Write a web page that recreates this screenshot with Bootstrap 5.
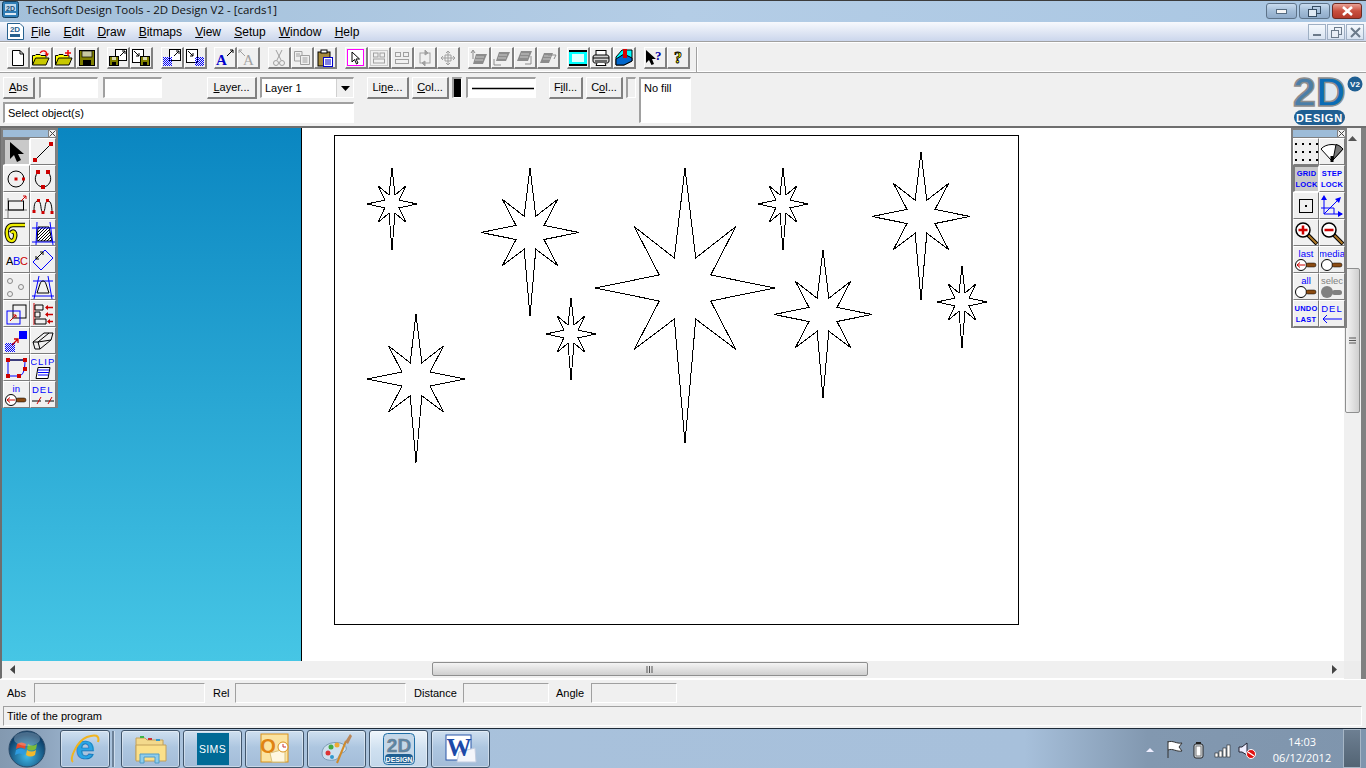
<!doctype html>
<html lang="en">
<head>
<meta charset="utf-8">
<title>TechSoft Design Tools - 2D Design V2 - [cards1]</title>
<link href="https://cdn.jsdelivr.net/npm/bootstrap@5.3.0/dist/css/bootstrap.min.css" rel="stylesheet">
<style>
html,body{height:768px;overflow:hidden}
body{background:#f0f0f0;font-family:"Liberation Sans",Arial,sans-serif;font-size:12px;color:#000;line-height:1.2}
.app{width:1366px;height:768px;position:relative}
svg{display:block;overflow:visible}
.titlebar{height:22px;background:linear-gradient(90deg,#a3c0da,#b4cde6 50%,#a9c6e2);border-top:1px solid #3c3c3c;padding-left:2px}
.titlebar-text{font-family:"Open Sans",sans-serif;font-size:11.5px;margin-left:7px;color:#111;margin-top:2px}
.winbtn{width:31px;height:16px;border:1px solid #5d7389;border-radius:3px;background:linear-gradient(#c9dcef,#a3bdd8 50%,#8fabc9);display:flex;align-items:center;justify-content:center}
.winbtn.shut{background:linear-gradient(#e9a195,#c9503f 50%,#b33a2b);border-color:#6b2a22;width:30px}
.winctl{margin-left:auto;margin-top:2px;margin-right:4px;gap:2px}
.menubar{height:20px;background:linear-gradient(#f7f9fd,#cbd6ec);padding-left:7px;border-bottom:1px solid #a0a0a0}
.menu-icon{margin-top:1px}
.menu-list{margin-left:7px;gap:13.2px;font-size:12px;padding-top:3px}
.mdibtn{width:18px;height:16px;border:1px solid #9fb0c4;background:linear-gradient(#f5f9fd,#d8e3f1);display:flex;align-items:center;justify-content:center}
.mdictl{margin-left:auto;margin-right:2px;margin-top:2px;gap:1px}
.toolrow{height:31px;border-top:1px solid #fff;border-bottom:1px solid #a0a0a0;padding:4px 0 0 7px;box-shadow:inset 0 -1px 0 #fff}
.grp{margin-right:7.75px}
.tb{width:23px;height:22px;background:#f0f0f0;border-top:1px solid #fff;border-left:1px solid #fff;border-right:2px solid #808080;border-bottom:2px solid #808080;display:flex;align-items:center;justify-content:center;padding:0;flex:none}
.tb-sep{width:1px;height:25px;background:#a0a0a0;margin-left:6px;box-shadow:1px 0 0 #fff}
.props{height:55px;position:relative;border-bottom:2px solid #6e6e6e;padding:4px 0 0 3px}
.pbtn{height:22px;background:#f0f0f0;border-top:1px solid #fff;border-left:1px solid #fff;border-right:2px solid #808080;border-bottom:2px solid #808080;text-align:center;padding:3px 0 0;font-size:11px;flex:none}
.pw32{width:32px}.pw50{width:50px}.pw42{width:42px}.pw37{width:37px}.pw34{width:34px}
.field{background:#fff;height:21px;border-top:2px solid #a0a0a0;border-left:2px solid #a0a0a0;border-right:1px solid #fff;border-bottom:1px solid #fff;font-size:11px;padding:3px 0 0 3px;flex:none}
.fw59{width:59px}.fw94{width:94px}.fw70{width:70px}.fw10{width:10px}.fw351{width:351px}.fw52{width:52px;height:46px}
.flatfield{background:#f0f0f0}
.dark{background:#000}
.drop{position:absolute;right:0;top:0;bottom:0;width:17px;background:#f0f0f0;display:flex;align-items:center;justify-content:center;border-left:1px solid #d0d0d0}
.l3{margin-left:3px}.l4{margin-left:4px}.l5{margin-left:5px}.l13{margin-left:13px}.l45{margin-left:45px}
.row2{position:absolute;left:3px;top:29px}
.logo-spot{position:absolute;left:1292px;top:1px}
.mainarea{height:533px;position:relative}
.panel{width:302px;background:linear-gradient(#0a86c1,#46c6e5);border-left:2px solid #6e6e6e;border-right:1px solid #000;flex:none}
.sheetarea{width:1042px;background:#fff;padding:7px 0 0 32px;flex:none}
.paper{width:685px;height:490px;border:1px solid #000;overflow:hidden}
.vscroll{width:17px;background:#f0f0f0;position:relative;flex:none}
.vthumb{position:absolute;left:1px;top:140px;width:15px;height:145px;border:1px solid #8e8f8f;border-radius:2px;background:linear-gradient(90deg,#f4f4f4,#cfcfcf);display:flex;align-items:center;justify-content:center}
.edgebar{width:5px;background:#808080;flex:none}
.arrow-u{position:absolute;left:4px;top:8px}
.hscrollwrap{height:18px}
.hscroll{width:1344px;background:#f0f0f0;position:relative;border-left:2px solid #6e6e6e;border-bottom:1px solid #fff;flex:none}
.hthumb{position:absolute;left:430px;top:1px;width:436px;height:14px;border:1px solid #8e8f8f;border-radius:2px;background:linear-gradient(#f4f4f4,#cfcfcf);display:flex;align-items:center;justify-content:center}
.harrow-l{position:absolute;left:8px;top:4px}
.harrow-r{position:absolute;right:7px;top:4px}
.corner{width:17px;background:#ececec;flex:none}
.coords{height:27px;padding:3px 0 0 7px;border-top:1px solid #fff;font-size:11px}
.coord-label{padding-top:4px;flex:none}
.cbox{height:20px;background:#f0f0f0;border-top:1px solid #a0a0a0;border-left:1px solid #a0a0a0;border-right:1px solid #fff;border-bottom:1px solid #fff;flex:none}
.cw171{width:171px}.cw86{width:86px}
.lab-abs{width:27px}.lab-rel{width:22px;margin-left:8px}.lab-dist{width:49px;margin-left:8px}.lab-ang{width:35px;margin-left:7px}
.statusbar{height:22px;padding:0 4px 0 3px}
.statusbox{height:20px;width:1359px;border-top:1px solid #a0a0a0;border-left:1px solid #a0a0a0;border-right:1px solid #fff;border-bottom:1px solid #fff;font-size:11px;padding:3px 0 0 3px}
.taskbar{height:40px;background:linear-gradient(90deg,#8399b0,#8ca3bc 3%,#a9c2dc 8%,#a7c0db 75%,#8298b0 84%,#7f95ad);border-top:1px solid #1d2a38;position:relative;padding-top:1px}
.orb{width:60px;flex:none;padding-left:8px}
.tk{width:59px;height:38px;border:1px solid #41566c;border-radius:3px;background:linear-gradient(#cfe0f0,#adc6e0 45%,#a3bcd8);display:flex;align-items:center;justify-content:center;margin-right:3px;flex:none;box-shadow:inset 0 0 0 1px rgba(255,255,255,.4)}
.tk.ie{width:50px;margin-right:2px}
.tk.on{background:linear-gradient(#eef5fb,#cfe0f0 50%,#c3d7ea)}
.tk-gripper{width:2px;height:36px;background:#6d8299;box-shadow:1px 0 0 #cddcec;margin:1px 7px 0 0}
.sims{width:32px;height:32px;background:#006a96;color:#fff;font-size:10.5px;font-weight:400;display:flex;align-items:center;justify-content:center;letter-spacing:.3px}
.tray{position:absolute;left:1142px;top:10px;gap:0}
.clock{position:absolute;left:1269px;top:5px;width:66px;text-align:center;color:#fff;font-family:"Open Sans",sans-serif;font-size:11px;line-height:16px}
.showdesk{position:absolute;right:5px;top:0;bottom:0;width:18px;border:1px solid #a6b6c6;background:linear-gradient(#6d7f92,#536474)}
.showedge{position:absolute;right:0;top:0;bottom:0;width:5px;background:#7f95ad}
.box-float{position:absolute;background:#808080;padding:2px;z-index:5}
.box-l{left:1px;top:0;width:57px;height:280px}
.box-r{left:1291px;top:0;width:56px;height:200px}
.box-title{height:7px;background:#9dbcd8;position:relative;margin-bottom:1px}
.box-x{position:absolute;right:-1px;top:-1px;width:9px;height:9px;background:#f0f0f0;border:1px solid #808080;display:flex;align-items:center;justify-content:center}
.box-grid{display:grid;grid-template-columns:1fr 1fr;gap:0}
.tool{height:27px;background:#f0f0f0;border-top:1px solid #fff;border-left:1px solid #fff;border-right:1px solid #7c7c7c;border-bottom:1px solid #7c7c7c;display:flex;align-items:center;justify-content:center;padding:0;overflow:hidden}
.tool.down{background:#c9c9c9;border-top:2px solid #7c7c7c;border-left:2px solid #7c7c7c;border-right:1px solid #fff;border-bottom:1px solid #fff}
.toolword{color:#00f;font-size:9.5px;line-height:11px;text-align:center}
.toolcaps{color:#00f;font-size:7.5px;line-height:11px;text-align:center;font-weight:700;letter-spacing:.2px}
.toolcaps-lg{color:#00f;font-size:9.5px;line-height:11px;text-align:center;letter-spacing:1px}
.toolgray{color:#808080}
.logotext{font-family:"Liberation Sans",sans-serif;font-weight:700}
</style>
</head>
<body>
<svg width="0" height="0" class="position-absolute">
<defs>
<pattern id="dith" width="2" height="2" patternUnits="userSpaceOnUse"><rect width="1" height="1" fill="#00f"/><rect x="1" y="1" width="1" height="1" fill="#00f"/></pattern>
<pattern id="hatch" width="3" height="3" patternUnits="userSpaceOnUse"><rect width="3" height="3" fill="#fff"/><path d="M0 3L3 0" stroke="#000"/></pattern>
<path id="star" d="M0-120L10.7-30L50.7-61.3L25.7-13L90 0L25.7 13L50.7 61.3L10.7 31L0 155L-10.7 31L-50.7 61.3L-25.7 13L-90 0L-25.7-13L-50.7-61.3L-10.7-30Z" fill="#fff" stroke="#000" vector-effect="non-scaling-stroke"/>
<g id="stick"><rect x="11" y="5" width="10" height="4" rx="2" fill="#8a4b12" stroke="#000" stroke-width=".5"/></g>
<g id="mag"><circle cx="9" cy="9" r="7" fill="#fff" stroke="#000" stroke-width="1.5"/><path d="M14 14L23 23" stroke="#000" stroke-width="4"/><path d="M14.5 14.5L22.5 22.5" stroke="#b07a28" stroke-width="2"/></g>
</defs>
</svg>

<div class="app d-flex flex-column">
  <div class="titlebar d-flex">
    <svg class="mt-0" width="17" height="17" viewBox="0 0 17 17"><rect x=".5" y=".5" width="16" height="16" rx="2" fill="#2f7db5" stroke="#14405f"/><rect x="3" y="3" width="11" height="7" fill="#bcd8ee"/><rect x="3" y="12" width="11" height="2" fill="#dfeaf3"/><text x="8.5" y="9.5" font-size="7" font-weight="700" text-anchor="middle" fill="#1c4f75" font-family="Liberation Sans">2D</text></svg>
    <div class="titlebar-text">TechSoft Design Tools - 2D Design V2 - [cards1]</div>
    <div class="winctl d-flex">
      <div class="winbtn"><svg width="11" height="5"><rect x=".5" y=".5" width="10" height="4" fill="#f6f6f6" stroke="#556b80"/></svg></div>
      <div class="winbtn"><svg width="13" height="11" viewBox="0 0 13 11"><rect x="4.5" y=".5" width="8" height="7" fill="none" stroke="#364d63" stroke-width="1"/><rect x=".5" y="3.5" width="8" height="7" fill="#dfe9f3" stroke="#364d63"/></svg></div>
      <div class="winbtn shut"><svg width="13" height="10"><path d="M2 1L11 9M11 1L2 9" stroke="#fff" stroke-width="2.6"/></svg></div>
    </div>
  </div>

  <div class="menubar d-flex">
    <svg class="menu-icon" width="17" height="17" viewBox="0 0 17 17"><path d="M.5.5H13L16.5 4V16.5H.5Z" fill="#fff" stroke="#27618e"/><text x="8" y="9" font-size="8" font-weight="700" text-anchor="middle" fill="#27618e" font-family="Liberation Sans">2D</text><rect x="3" y="11" width="10" height="3" fill="#27618e"/></svg>
    <div class="menu-list d-flex">
      <span><u>F</u>ile</span><span><u>E</u>dit</span><span><u>D</u>raw</span><span><u>B</u>itmaps</span><span><u>V</u>iew</span><span><u>S</u>etup</span><span><u>W</u>indow</span><span><u>H</u>elp</span>
    </div>
    <div class="mdictl d-flex">
      <div class="mdibtn"><svg width="9" height="9"><rect y="6" width="8" height="2" fill="#6b7a8a"/></svg></div>
      <div class="mdibtn"><svg width="11" height="11"><rect x="3.5" y=".5" width="7" height="7" fill="none" stroke="#6b7a8a"/><rect x=".5" y="3.5" width="7" height="7" fill="#e8eef6" stroke="#6b7a8a"/></svg></div>
      <div class="mdibtn"><svg width="11" height="11"><path d="M1 1L10 10M10 1L1 10" stroke="#6b7a8a" stroke-width="2"/></svg></div>
    </div>
  </div>

  <div class="toolrow d-flex">
    <div class="d-flex grp">
      <button class="tb"><svg width="16" height="18" viewBox="0 0 16 18"><path d="M2.500 1.500H10L13.500 5V16.500H2.500Z" fill="#fff" stroke="#000"/><path d="M10 1.500V5H13.500" fill="none" stroke="#000"/></svg></button>
      <button class="tb"><svg width="18" height="16" viewBox="0 0 18 16"><path d="M.5 15V5.500H3L4 4.500H8L9 5.500H14V7.500" fill="#ff0" stroke="#000"/><path d="M.5 15L3.500 8H17L14 15Z" fill="#c8c800" stroke="#000"/><path d="M8 3C10 0 14 0 15 4" fill="none" stroke="#e00" stroke-width="1.300"/><path d="M12.500 3.500H17L15 6.500Z" fill="#e00"/></svg></button>
      <button class="tb"><svg width="18" height="16" viewBox="0 0 18 16"><path d="M.5 15V5.500H3L4 4.500H8L9 5.500H14V7.500" fill="#ff0" stroke="#000"/><path d="M.5 15L3.500 8H17L14 15Z" fill="#c8c800" stroke="#000"/><path d="M13 0V6M10 3H16" stroke="#e00" stroke-width="1.500"/></svg></button>
      <button class="tb"><svg width="16" height="16" viewBox="0 0 16 16"><rect x=".5" y=".5" width="15" height="15" fill="#808000" stroke="#000"/><rect x="3" y="1" width="10" height="6" fill="#c8c8a0" stroke="#000" stroke-width=".7"/><rect x="4" y="10" width="8" height="5" fill="#000"/></svg></button>
    </div>
    <div class="d-flex grp">
      <button class="tb"><svg width="18" height="17" viewBox="0 0 18 17"><rect x="6.500" y=".5" width="11" height="11" fill="#fff" stroke="#000"/><path d="M11 7L16 2M13 2H16V5" fill="none" stroke="#000"/><rect x=".5" y="7.500" width="9" height="9" fill="#808000" stroke="#000"/><rect x="3" y="8" width="4" height="3" fill="#dcdcb0"/><rect x="3" y="13" width="4" height="3" fill="#000"/></svg></button>
      <button class="tb"><svg width="18" height="17" viewBox="0 0 18 17"><rect x=".5" y=".5" width="11" height="13" fill="#fff" stroke="#000"/><path d="M2 2L7 7M4 7H7V4" fill="none" stroke="#000"/><rect x="8.500" y="7.500" width="9" height="9" fill="#808000" stroke="#000"/><rect x="11" y="8" width="4" height="3" fill="#dcdcb0"/><rect x="11" y="13" width="4" height="3" fill="#000"/></svg></button>
    </div>
    <div class="d-flex grp">
      <button class="tb"><svg width="18" height="17" viewBox="0 0 18 17"><rect x="6.500" y=".5" width="11" height="11" fill="#fff" stroke="#000"/><path d="M11 7L16 2M13 2H16V5" fill="none" stroke="#000"/><rect y="8" width="9" height="9" fill="url(#dith)"/></svg></button>
      <button class="tb"><svg width="18" height="17" viewBox="0 0 18 17"><rect x=".5" y=".5" width="11" height="13" fill="#fff" stroke="#000"/><path d="M2 2L7 7M4 7H7V4" fill="none" stroke="#000"/><rect x="9" y="8" width="9" height="9" fill="url(#dith)"/></svg></button>
    </div>
    <div class="d-flex grp">
      <button class="tb"><svg width="20" height="18" viewBox="0 0 20 18"><text x="1" y="16" font-family="Liberation Serif" font-size="15" font-weight="700" fill="#00c">A</text><path d="M12 7L18 1M15 1H18V4" fill="none" stroke="#000"/></svg></button>
      <button class="tb"><svg width="20" height="18" viewBox="0 0 20 18"><text x="5" y="16" font-family="Liberation Serif" font-size="15" fill="#a0a0a0">A</text><path d="M7 7L1 1M4 1H1V4" fill="none" stroke="#a0a0a0"/></svg></button>
    </div>
    <div class="d-flex grp">
      <button class="tb"><svg width="12" height="18" viewBox="0 0 12 18" fill="none" stroke="#a0a0a0"><path d="M3 1L8 11M9 1L4 11"/><circle cx="3" cy="14" r="2.500"/><circle cx="9" cy="14" r="2.500"/></svg></button>
      <button class="tb"><svg width="18" height="16" viewBox="0 0 18 16" fill="#f0f0f0" stroke="#a0a0a0"><path d="M1.500 1.500H9V11H1.500Z"/><path d="M7.500 5.500H16.500V14.500H7.500Z"/><path d="M3 4H7M3 6H7M9.500 8H14.500M9.500 10H14.500M9.500 12H14.500" fill="none"/></svg></button>
      <button class="tb"><svg width="16" height="18" viewBox="0 0 16 18"><rect x="1" y="3" width="12" height="14" fill="#a68a3c" stroke="#000"/><rect x="4" y="1" width="6" height="3" fill="#fff" stroke="#000"/><rect x="6.500" y="8.500" width="9" height="9" fill="#fff" stroke="#00c"/><path d="M8 11H14M8 13H14M8 15H14" stroke="#00c"/></svg></button>
    </div>
    <div class="d-flex grp">
      <button class="tb"><svg width="17" height="17" viewBox="0 0 17 17"><rect x=".5" y=".5" width="16" height="16" fill="#fff" stroke="#f0f"/><path d="M5 3V13L7.500 10.500L9.500 15L11 14L9 10H12.500Z" fill="#fff" stroke="#000"/></svg></button>
      <button class="tb"><svg width="18" height="16" viewBox="0 0 18 16" fill="none" stroke="#a0a0a0"><rect x=".5" y=".5" width="17" height="15" stroke-dasharray="1 1"/><rect x="3.500" y="3" width="4.500" height="4"/><rect x="10" y="3" width="4.500" height="4"/><rect x="3.500" y="9" width="11" height="4"/></svg></button>
      <button class="tb"><svg width="16" height="14" viewBox="0 0 16 14" fill="none" stroke="#a0a0a0"><rect x="1.500" y="1.500" width="5" height="4"/><rect x="9.500" y="1.500" width="5" height="4"/><rect x="1.500" y="8.500" width="13" height="4"/></svg></button>
      <button class="tb"><svg width="16" height="16" viewBox="0 0 16 16" fill="none" stroke="#a0a0a0"><rect x="3" y="3" width="10" height="10"/><path d="M8 0L11 3L8 5ZM8 16L5 13L8 11Z" fill="#a0a0a0"/></svg></button>
      <button class="tb"><svg width="16" height="16" viewBox="0 0 16 16" fill="none" stroke="#a0a0a0"><path d="M8 1V15M1 8H15M6 3L8 1L10 3M6 13L8 15L10 13M3 6L1 8L3 10M13 6L15 8L13 10M5 5H11V11H5Z"/></svg></button>
    </div>
    <div class="d-flex grp">
      <button class="tb"><svg width="18" height="16" viewBox="0 0 18 16"><path d="M6 4H17L13 14H3Z" fill="#8c8c8c"/><path d="M6 7H14M5 10H13" stroke="#c8c8c8"/><path d="M3 1V9M1 3L3 0L5 3" fill="none" stroke="#8c8c8c"/></svg></button>
      <button class="tb"><svg width="18" height="16" viewBox="0 0 18 16"><path d="M6 2H17L13 11H3Z" fill="#8c8c8c"/><path d="M6 5H14M5 8H13" stroke="#c8c8c8"/><path d="M1 15H8M1 15V9" fill="none" stroke="#8c8c8c"/></svg></button>
      <button class="tb"><svg width="18" height="16" viewBox="0 0 18 16"><path d="M5 1H16L12 11H1Z" fill="#8c8c8c"/><path d="M5 4H13M4 7H12" stroke="#c8c8c8"/><path d="M15 6V14H9" fill="none" stroke="#8c8c8c"/></svg></button>
      <button class="tb"><svg width="18" height="14" viewBox="0 0 18 14"><path d="M5 2H14L10 12H1Z" fill="#8c8c8c"/><path d="M5 5H12M4 8H11" stroke="#c8c8c8"/><path d="M9 4H17L15 8" fill="none" stroke="#8c8c8c"/></svg></button>
    </div>
    <div class="d-flex grp">
      <button class="tb"><svg width="18" height="16" viewBox="0 0 18 16"><rect width="18" height="16" fill="#000"/><rect y="2" width="18" height="12" fill="#0ff"/><rect x="3" y="4" width="12" height="8" fill="#dff"/></svg></button>
      <button class="tb"><svg width="18" height="16" viewBox="0 0 18 16"><rect x="4" y=".5" width="10" height="5" fill="#fff" stroke="#000"/><path d="M1 7C1 5 3 5 4 5H14C15 5 17 5 17 7V11C17 13 15 13 14 13H4C3 13 1 13 1 11Z" fill="#d0d0d0" stroke="#000"/><path d="M1 8H17M3 11H15" stroke="#000"/><path d="M5 13L4 15.500H14L13 13" fill="#fff" stroke="#000"/></svg></button>
      <button class="tb"><svg width="18" height="17" viewBox="0 0 18 17"><path d="M7 1H17V12L9 16H1V8Z" fill="#0ff" stroke="#000"/><path d="M1 10L9 5L17 9V12L9 16H1Z" fill="#06c" stroke="#000"/><rect x="8" y="0" width="4" height="9" fill="#d00"/></svg></button>
    </div>
    <div class="d-flex">
      <button class="tb"><svg width="20" height="18" viewBox="0 0 20 18"><path d="M1 1V14L4 11L6.500 16L9 15L7 10H11Z" fill="#000"/><text x="10" y="11" font-family="Liberation Serif" font-size="13" font-weight="700" fill="#00a">?</text></svg></button>
      <button class="tb"><svg width="16" height="20" viewBox="0 0 16 20"><text x="8" y="15" text-anchor="middle" font-family="Liberation Serif" font-size="16" font-weight="700" fill="#ff0" stroke="#000" stroke-width=".8">?</text></svg></button>
    </div>
    <div class="tb-sep"></div>
  </div>

  <div class="props">
    <div class="d-flex align-items-start">
      <div class="pbtn pw32"><u>A</u>bs</div>
      <div class="field fw59 l4"></div>
      <div class="field fw59 l5"></div>
      <div class="pbtn pw50 l45"><u>L</u>ayer...</div>
      <div class="field fw94 l3 position-relative">Layer 1<span class="drop"><svg width="9" height="5"><path d="M0 0H9L4.500 5Z"/></svg></span></div>
      <div class="pbtn pw42 l13">Li<u>n</u>e...</div>
      <div class="pbtn pw37 l3"><u>C</u>ol...</div>
      <div class="field fw10 dark l3"></div>
      <div class="field fw70 l4 d-flex align-items-center p-0"><svg width="66" height="3"><path d="M4 1.500H66" stroke="#000" stroke-width="1.500"/></svg></div>
      <div class="pbtn pw34 l13">F<u>i</u>ll...</div>
      <div class="pbtn pw37 l3">C<u>o</u>l...</div>
      <div class="field fw10 flatfield l3"></div>
      <div class="field fw52 l3">No fill</div>
    </div>
    <div class="row2 field fw351">Select object(s)</div>
    <svg class="logo-spot" width="72" height="53" viewBox="0 0 72 53">
      <text x="1" y="32" class="logotext" font-size="41" fill="#4a7ea8" stroke="#8d8d8d" stroke-width="1.500">2</text>
      <rect x="31" y="10" width="13" height="18" fill="#dfe8f0"/>
      <text x="24" y="32" class="logotext" font-size="41" fill="#0a6cb5" stroke="#8d8d8d" stroke-width="1.500">D</text>
      <circle cx="63" cy="10" r="7.500" fill="#1f5f92"/>
      <text x="63" y="13" text-anchor="middle" class="logotext" font-size="8" fill="#fff">V2</text>
      <rect x="2" y="36" width="51" height="15" rx="7.500" fill="#1f5f92"/>
      <text x="27.500" y="47.500" text-anchor="middle" class="logotext" font-size="11" letter-spacing=".8" fill="#fff">DESIGN</text>
    </svg>
  </div>

  <div class="mainarea d-flex">
    <div class="panel"></div>
    <div class="sheetarea">
      <div class="paper">
        <svg width="683" height="488" viewBox="335 136 683 488" shape-rendering="crispEdges">
          <use href="#star" transform="translate(685 288)"/>
          <use href="#star" transform="translate(392 204) scale(.278 .298)"/>
          <use href="#star" transform="translate(783 204) scale(.278 .298)"/>
          <use href="#star" transform="translate(962 302) scale(.278 .298)"/>
          <use href="#star" transform="translate(571 334) scale(.278 .298)"/>
          <use href="#star" transform="translate(530 232.500) scale(.544 .54)"/>
          <use href="#star" transform="translate(921 216.500) scale(.544 .54)"/>
          <use href="#star" transform="translate(823 314.500) scale(.544 .54)"/>
          <use href="#star" transform="translate(416 379) scale(.544 .54)"/>
        </svg>
      </div>
    </div>
    <div class="vscroll">
      <svg class="arrow-u" width="9" height="5"><path d="M0 5H9L4.500 0Z" fill="#555"/></svg>
      <div class="vthumb"><svg width="9" height="8"><path d="M1 1H8M1 3.500H8M1 6H8" stroke="#555"/></svg></div>
    </div>
    <div class="edgebar"></div>

    <div class="box-float box-l">
      <div class="box-title"><span class="box-x"><svg width="7" height="7"><path d="M.5.5L6.500 6.500M6.500.5L.5 6.500" stroke="#444"/></svg></span></div>
      <div class="box-grid">
        <button class="tool down"><svg width="20" height="22" viewBox="0 0 20 22"><path d="M3 1V18L7 14L10 21L14 19L11 13H17Z" fill="#000"/></svg></button>
        <button class="tool"><svg width="24" height="24" viewBox="0 0 24 24"><path d="M4 20L20 4" stroke="#000" fill="none"/><rect x="2" y="18" width="4" height="4" fill="#c00"/><rect x="18" y="2" width="4" height="4" fill="#c00"/></svg></button>
        <button class="tool"><svg width="24" height="24" viewBox="0 0 24 24"><circle cx="12" cy="12" r="8" fill="none" stroke="#000"/><rect x="10.500" y="10.500" width="3" height="3" fill="#c00"/><rect x="18" y="10.500" width="3" height="3" fill="#c00"/></svg></button>
        <button class="tool"><svg width="24" height="24" viewBox="0 0 24 24"><path d="M7 5C1 12 6 20 12 20C18 20 23 12 17 5" fill="none" stroke="#000"/><rect x="5" y="3" width="4" height="4" fill="#c00"/><rect x="15" y="3" width="4" height="4" fill="#c00"/><rect x="10" y="18" width="4" height="4" fill="#c00"/></svg></button>
        <button class="tool"><svg width="24" height="24" viewBox="0 0 24 24"><path d="M1 16H23M4 4V24" stroke="#777" fill="none"/><rect x="4.500" y="7" width="15" height="9" fill="none" stroke="#000"/><path d="M17 7L22 2M19 2H22V5" stroke="#c00" fill="none"/></svg></button>
        <button class="tool"><svg width="24" height="24" viewBox="0 0 24 24"><path d="M3 17C3 10 4 7 7 7C11 7 9 18 12 18C15 18 13 7 17 7C20 7 21 12 21 19" fill="none" stroke="#000"/><g fill="#c00"><rect x="1.500" y="16" width="3" height="3"/><rect x="6" y="5" width="3" height="3"/><rect x="15" y="5" width="3" height="3"/><rect x="10.500" y="17" width="3" height="3"/><rect x="19.500" y="17" width="3" height="3"/></g></svg></button>
        <button class="tool"><svg width="24" height="24" viewBox="0 0 24 24"><path d="M21 4H9C4 4 2 8 3 14C4 21 10 22 11 16C12 11 9 9 7 12" fill="none" stroke="#000" stroke-width="4.500"/><path d="M21 4H9C4 4 2 8 3 14C4 21 10 22 11 16C12 11 9 9 7 12" fill="none" stroke="#ee0" stroke-width="2.500"/></svg></button>
        <button class="tool"><svg width="24" height="24" viewBox="0 0 24 24"><path d="M7 6H18L21 20H6Z" fill="url(#hatch)" stroke="#000"/><path d="M1 7H24M1 21H24M6 1L5 24M19 1L22 24" stroke="#00f" fill="none"/></svg></button>
        <button class="tool"><svg width="24" height="18" viewBox="0 0 24 18"><text x="2" y="14" font-size="11" font-family="Liberation Sans" fill="#000">A</text><text x="9" y="14" font-size="11" font-family="Liberation Sans" fill="#00f">B</text><text x="16" y="14" font-size="11" font-family="Liberation Sans" fill="#c00">C</text></svg></button>
        <button class="tool"><svg width="24" height="24" viewBox="0 0 24 24"><path d="M2 14L14 2M10 22L22 10M2 14L10 22M14 2L22 10" stroke="#00f" fill="none"/><path d="M5 11L12 4M5 8V11H8M9 4H12V7" stroke="#000" fill="none"/></svg></button>
        <button class="tool"><svg width="22" height="22" viewBox="0 0 22 22" fill="none" stroke="#888"><circle cx="5" cy="5" r="2.500"/><circle cx="16" cy="11" r="2.500"/><circle cx="5" cy="18" r="2.500"/></svg></button>
        <button class="tool"><svg width="24" height="24" viewBox="0 0 24 24" fill="none"><path d="M2 6H22M1 21H23M8 1L3 24M17 1L21 24" stroke="#00f"/><path d="M6 18L9 9C10 5 14 5 15 9L18 18Z" stroke="#000"/></svg></button>
        <button class="tool"><svg width="24" height="24" viewBox="0 0 24 24"><rect x="9" y="3" width="13" height="13" fill="none" stroke="#000"/><rect x="3" y="9" width="13" height="13" fill="none" stroke="#00f"/><path d="M6 19L12 13M9 13H12V16" stroke="#c00" fill="none"/></svg></button>
        <button class="tool"><svg width="24" height="24" viewBox="0 0 24 24"><path d="M3 1V23" stroke="#c00"/><path d="M4 3H12V8H4ZM4 10H9V15H4ZM4 17H15V22H4Z" fill="none" stroke="#000"/><path d="M15 5.500H22M15 12.500H22M17 19.500H22" stroke="#c00" stroke-width="1.500"/><path d="M14 5.500L17 3V8ZM14 12.500L17 10V15ZM16 19.500L19 17V22Z" fill="#c00"/></svg></button>
        <button class="tool"><svg width="24" height="24" viewBox="0 0 24 24"><rect x="15" y="2" width="8" height="8" fill="#00f"/><rect x="1" y="14" width="10" height="9" fill="url(#dith)"/><path d="M8 16L14 10M10 10H14V14" stroke="#c00" fill="none" stroke-width="1.300"/></svg></button>
        <button class="tool"><svg width="24" height="24" viewBox="0 0 24 24" fill="#f0f0f0" stroke="#000"><path d="M2 13L13 4H22L20 11L9 20H4Z"/><path d="M2 13L7 13L9 20M7 13L18 4M7 13L20 11" fill="none"/></svg></button>
        <button class="tool"><svg width="24" height="24" viewBox="0 0 24 24"><path d="M4 4V20H14C19 20 21 15 21 4Z" fill="none" stroke="#00f"/><path d="M4 4H21" stroke="#000"/><g fill="#c00"><rect x="2" y="2" width="4" height="4"/><rect x="19" y="2" width="4" height="4"/><rect x="19" y="11" width="4" height="4"/><rect x="2" y="18" width="4" height="4"/><rect x="13" y="18" width="4" height="4"/></g></svg></button>
        <button class="tool flex-column"><span class="toolcaps-lg">CLIP</span><svg width="16" height="12" viewBox="0 0 16 12"><path d="M3 .5H15L13 11.500H1Z" fill="#fff" stroke="#000"/><path d="M3 3H14M3 5.500H14M3 8H13" stroke="#00f"/></svg></button>
        <button class="tool flex-column"><span class="toolword">in</span><svg width="24" height="12" viewBox="0 1 24 12"><circle cx="7" cy="7" r="5.500" fill="#fff" stroke="#000"/><path d="M3 7H11M3 7L6 4.500M3 7L6 9.500" stroke="#c00" fill="none"/><use href="#stick" x="1" y="0"/></svg></button>
        <button class="tool flex-column"><span class="toolcaps-lg">DEL</span><svg width="24" height="11" viewBox="0 0 24 11"><path d="M1 6H10M14 6H23" stroke="#000"/><path d="M6 9L10 2M17 9L21 2" stroke="#c00"/></svg></button>
      </div>
    </div>

    <div class="box-float box-r">
      <div class="box-title"><span class="box-x"><svg width="7" height="7"><path d="M.5.5L6.500 6.500M6.500.5L.5 6.500" stroke="#444"/></svg></span></div>
      <div class="box-grid">
        <button class="tool"><svg width="24" height="22" viewBox="0 0 24 22"><g fill="#000"><rect x="1" y="2" width="2" height="2"/><rect x="8" y="2" width="2" height="2"/><rect x="15" y="2" width="2" height="2"/><rect x="22" y="2" width="2" height="2"/><rect x="1" y="10" width="2" height="2"/><rect x="8" y="10" width="2" height="2"/><rect x="15" y="10" width="2" height="2"/><rect x="22" y="10" width="2" height="2"/><rect x="1" y="18" width="2" height="2"/><rect x="8" y="18" width="2" height="2"/><rect x="15" y="18" width="2" height="2"/><rect x="22" y="18" width="2" height="2"/></g></svg></button>
        <button class="tool"><svg width="24" height="22" viewBox="0 0 24 22"><path d="M1 8C6 2 18 2 23 8L13 19H11Z" fill="#fff" stroke="#000"/><path d="M16 3.500C19 4 21 6 23 8L13 19Z" fill="#777" stroke="#000"/><rect x="10.500" y="15" width="3" height="6" fill="#000"/></svg></button>
        <button class="tool down"><span class="toolcaps">GRID<br>LOCK</span></button>
        <button class="tool"><span class="toolcaps">STEP<br>LOCK</span></button>
        <button class="tool"><svg width="14" height="14" viewBox="0 0 14 14"><rect x=".5" y=".5" width="13" height="13" fill="none" stroke="#000"/><rect x="6" y="6" width="2" height="2"/></svg></button>
        <button class="tool"><svg width="24" height="24" viewBox="0 0 24 24"><path d="M4 4V20H22M4 20L19 5M1 14H14V20" stroke="#00f" fill="none"/><path d="M1 6L4 1L7 6ZM18 17L23 20L18 23ZM15 5L21 3L19 9Z" fill="#00f"/></svg></button>
        <button class="tool"><svg width="24" height="24" viewBox="0 0 24 24"><use href="#mag"/><path d="M4.500 9H13.500M9 4.500V13.500" stroke="#c00" stroke-width="2.500"/></svg></button>
        <button class="tool"><svg width="24" height="24" viewBox="0 0 24 24"><use href="#mag"/><path d="M4.500 9H13.500" stroke="#c00" stroke-width="2.500"/></svg></button>
        <button class="tool flex-column"><span class="toolword">last</span><svg width="24" height="12" viewBox="0 1 24 12"><circle cx="7" cy="7" r="5.500" fill="#fff" stroke="#000"/><path d="M3 7H11M3 7L6 4.500M3 7L6 9.500" stroke="#c00" fill="none"/><use href="#stick" x="1"/></svg></button>
        <button class="tool flex-column"><span class="toolword">media</span><svg width="24" height="12" viewBox="0 1 24 12"><circle cx="7" cy="7" r="5.500" fill="#fff" stroke="#000"/><use href="#stick" x="1"/></svg></button>
        <button class="tool flex-column"><span class="toolword">all</span><svg width="24" height="12" viewBox="0 1 24 12"><circle cx="7" cy="7" r="5.500" fill="#fff" stroke="#000"/><use href="#stick" x="1"/></svg></button>
        <button class="tool flex-column"><span class="toolword toolgray">selec</span><svg width="24" height="12" viewBox="0 1 24 12"><circle cx="7" cy="7" r="6" fill="#808080"/><rect x="12" y="5" width="10" height="5" rx="2.500" fill="#808080"/></svg></button>
        <button class="tool"><span class="toolcaps">UNDO<br>LAST</span></button>
        <button class="tool flex-column"><span class="toolcaps-lg">DEL</span><svg width="22" height="10" viewBox="0 0 22 10"><path d="M2 5H21M6 1L2 5L6 9" fill="none" stroke="#00f"/></svg></button>
      </div>
    </div>
  </div>

  <div class="hscrollwrap d-flex">
    <div class="hscroll">
      <svg class="harrow-l" width="5" height="9"><path d="M5 0V9L0 4.500Z" fill="#444"/></svg>
      <div class="hthumb"><svg width="8" height="9"><path d="M1 1V8M3.500 1V8M6 1V8" stroke="#555"/></svg></div>
      <svg class="harrow-r" width="5" height="9"><path d="M0 0V9L5 4.500Z" fill="#444"/></svg>
    </div>
    <div class="corner"></div>
    <div class="edgebar"></div>
  </div>

  <div class="coords d-flex">
    <div class="coord-label lab-abs">Abs</div><div class="cbox cw171"></div>
    <div class="coord-label lab-rel">Rel</div><div class="cbox cw171"></div>
    <div class="coord-label lab-dist">Distance</div><div class="cbox cw86"></div>
    <div class="coord-label lab-ang">Angle</div><div class="cbox cw86"></div>
  </div>
  <div class="statusbar"><div class="statusbox">Title of the program</div></div>

  <div class="taskbar d-flex">
    <div class="orb"><svg width="38" height="38" viewBox="0 0 38 38"><defs><radialGradient id="og" cx=".5" cy=".7" r=".6"><stop offset="0" stop-color="#3fb8e8"/><stop offset="1" stop-color="#0c3c66"/></radialGradient></defs><circle cx="19" cy="19" r="18" fill="url(#og)" stroke="#2a4a68"/><path d="M9 14C12 12 15 12 18 14L17 19C14 17 11 17 8 19Z" fill="#e84a2a"/><path d="M20 14C23 16 26 16 29 14L28 19C25 21 22 21 19 19Z" fill="#7cbb3a"/><path d="M8 20C11 18 14 18 17 20L16 25C13 23 10 23 7 25Z" fill="#2e9be0"/><path d="M19 20C22 22 25 22 28 20L27 25C24 27 21 27 18 25Z" fill="#f2b92a"/><ellipse cx="19" cy="9" rx="13" ry="7" fill="#fff" opacity=".25"/></svg></div>
    <div class="tk ie"><svg width="32" height="32" viewBox="0 0 32 32"><text x="16" y="26" text-anchor="middle" font-family="Liberation Sans" font-size="34" font-weight="700" fill="#2aa5e6" stroke="#0e6fb5" stroke-width=".7">e</text><path d="M4 29C0 26 8 8 18 4C26 1 31 2 29 9" fill="none" stroke="#f0b420" stroke-width="2"/></svg></div>
    <div class="tk-gripper"></div>
    <div class="tk"><svg width="32" height="30" viewBox="0 0 32 30"><path d="M1 26V4H10L12 6H28V26Z" fill="#f3d98c" stroke="#c2a05a"/><rect x="5" y="2" width="4" height="2" fill="#3cb54a"/><rect x="13" y="4" width="4" height="2" fill="#c33"/><rect x="21" y="5" width="4" height="2" fill="#39c"/><path d="M1 11H31V27H1Z" fill="#fbe08a" stroke="#c2a05a"/><path d="M5 29V20H24V29H20V23H9V29Z" fill="#8fcdec" stroke="#4e9cc8"/></svg></div>
    <div class="tk"><div class="sims">SIMS</div></div>
    <div class="tk"><svg width="32" height="32" viewBox="0 0 32 32"><rect x="2" y="1" width="27" height="28" fill="#fbe3a0" stroke="#d9921a"/><text x="9" y="20" text-anchor="middle" font-family="Liberation Sans" font-size="20" font-weight="700" fill="#e08412">O</text><path d="M11 20L26 16V29H13Z" fill="#fff7e0" stroke="#d9c27a"/><circle cx="24" cy="14" r="5" fill="#fff" stroke="#d9921a"/><path d="M24 11V14H27" stroke="#c33" fill="none"/></svg></div>
    <div class="tk"><svg width="34" height="32" viewBox="0 0 34 32"><path d="M2 20C2 12 12 8 20 10C28 12 28 18 22 20C18 21 20 26 14 27C7 28 2 26 2 20Z" fill="#cfe0ee" stroke="#7b9bb5"/><circle cx="8" cy="20" r="2.500" fill="#d33"/><circle cx="11" cy="14" r="2.500" fill="#4a4"/><circle cx="17" cy="12" r="2.500" fill="#ea3"/><circle cx="12" cy="24" r="2" fill="#39c"/><path d="M17 30L26 8" stroke="#d08a2a" stroke-width="2"/><path d="M25 9L30 1L32 3L28 11Z" fill="#b9875a"/></svg></div>
    <div class="tk on"><svg width="32" height="32" viewBox="0 0 32 32"><rect x=".5" y=".5" width="31" height="31" rx="4" fill="#c4d7e8" stroke="#1e6ea5"/><text x="16" y="19" text-anchor="middle" class="logotext" font-size="19" fill="#5787ac" stroke="#7c7c7c" stroke-width=".5">2D</text><rect x="2" y="21" width="28" height="9" rx="4" fill="#1f5f92"/><text x="16" y="28.500" text-anchor="middle" class="logotext" font-size="7" fill="#fff">DESIGN</text></svg></div>
    <div class="tk"><svg width="32" height="30" viewBox="0 0 32 30"><rect x="1" y="1" width="25" height="25" fill="#fff" stroke="#2a56a8"/><path d="M14 18L30 14L31 28H12Z" fill="#f4f6fb" stroke="#c3cde0"/><text x="14" y="22" text-anchor="middle" font-family="Liberation Serif" font-size="25" font-weight="700" fill="#1c4aa8">W</text></svg></div>

    <div class="tray d-flex align-items-center">
      <svg width="120" height="20" viewBox="0 0 120 20"><path d="M4 13H12L8 9Z" fill="#eef"/><path d="M26 2V19M26 3C31 1 34 5 40 4L37 8L40 12C34 13 31 9 26 11" fill="#fff" stroke="#333"/><rect x="52" y="5" width="9" height="14" rx="2" fill="#dfe6ec" stroke="#222"/><rect x="54" y="3" width="5" height="2" fill="#222"/><rect x="54" y="7" width="5" height="10" fill="#fff" stroke="#777"/><g fill="#fff" stroke="#222" stroke-width=".6"><rect x="73" y="14" width="3" height="4"/><rect x="77" y="12" width="3" height="6"/><rect x="81" y="9" width="3" height="9"/><rect x="85" y="6" width="3" height="12"/></g><path d="M97 8H100L105 4V16L100 13H97Z" fill="#eef" stroke="#223"/><circle cx="109" cy="15" r="4.500" fill="#e01010" stroke="#fff"/><path d="M106 13L112 17" stroke="#fff" stroke-width="1.500"/></svg>
    </div>
    <div class="clock">14:03<br>06/12/2012</div>
    <div class="showdesk"></div>
    <div class="showedge"></div>
  </div>
</div>
</body>
</html>
